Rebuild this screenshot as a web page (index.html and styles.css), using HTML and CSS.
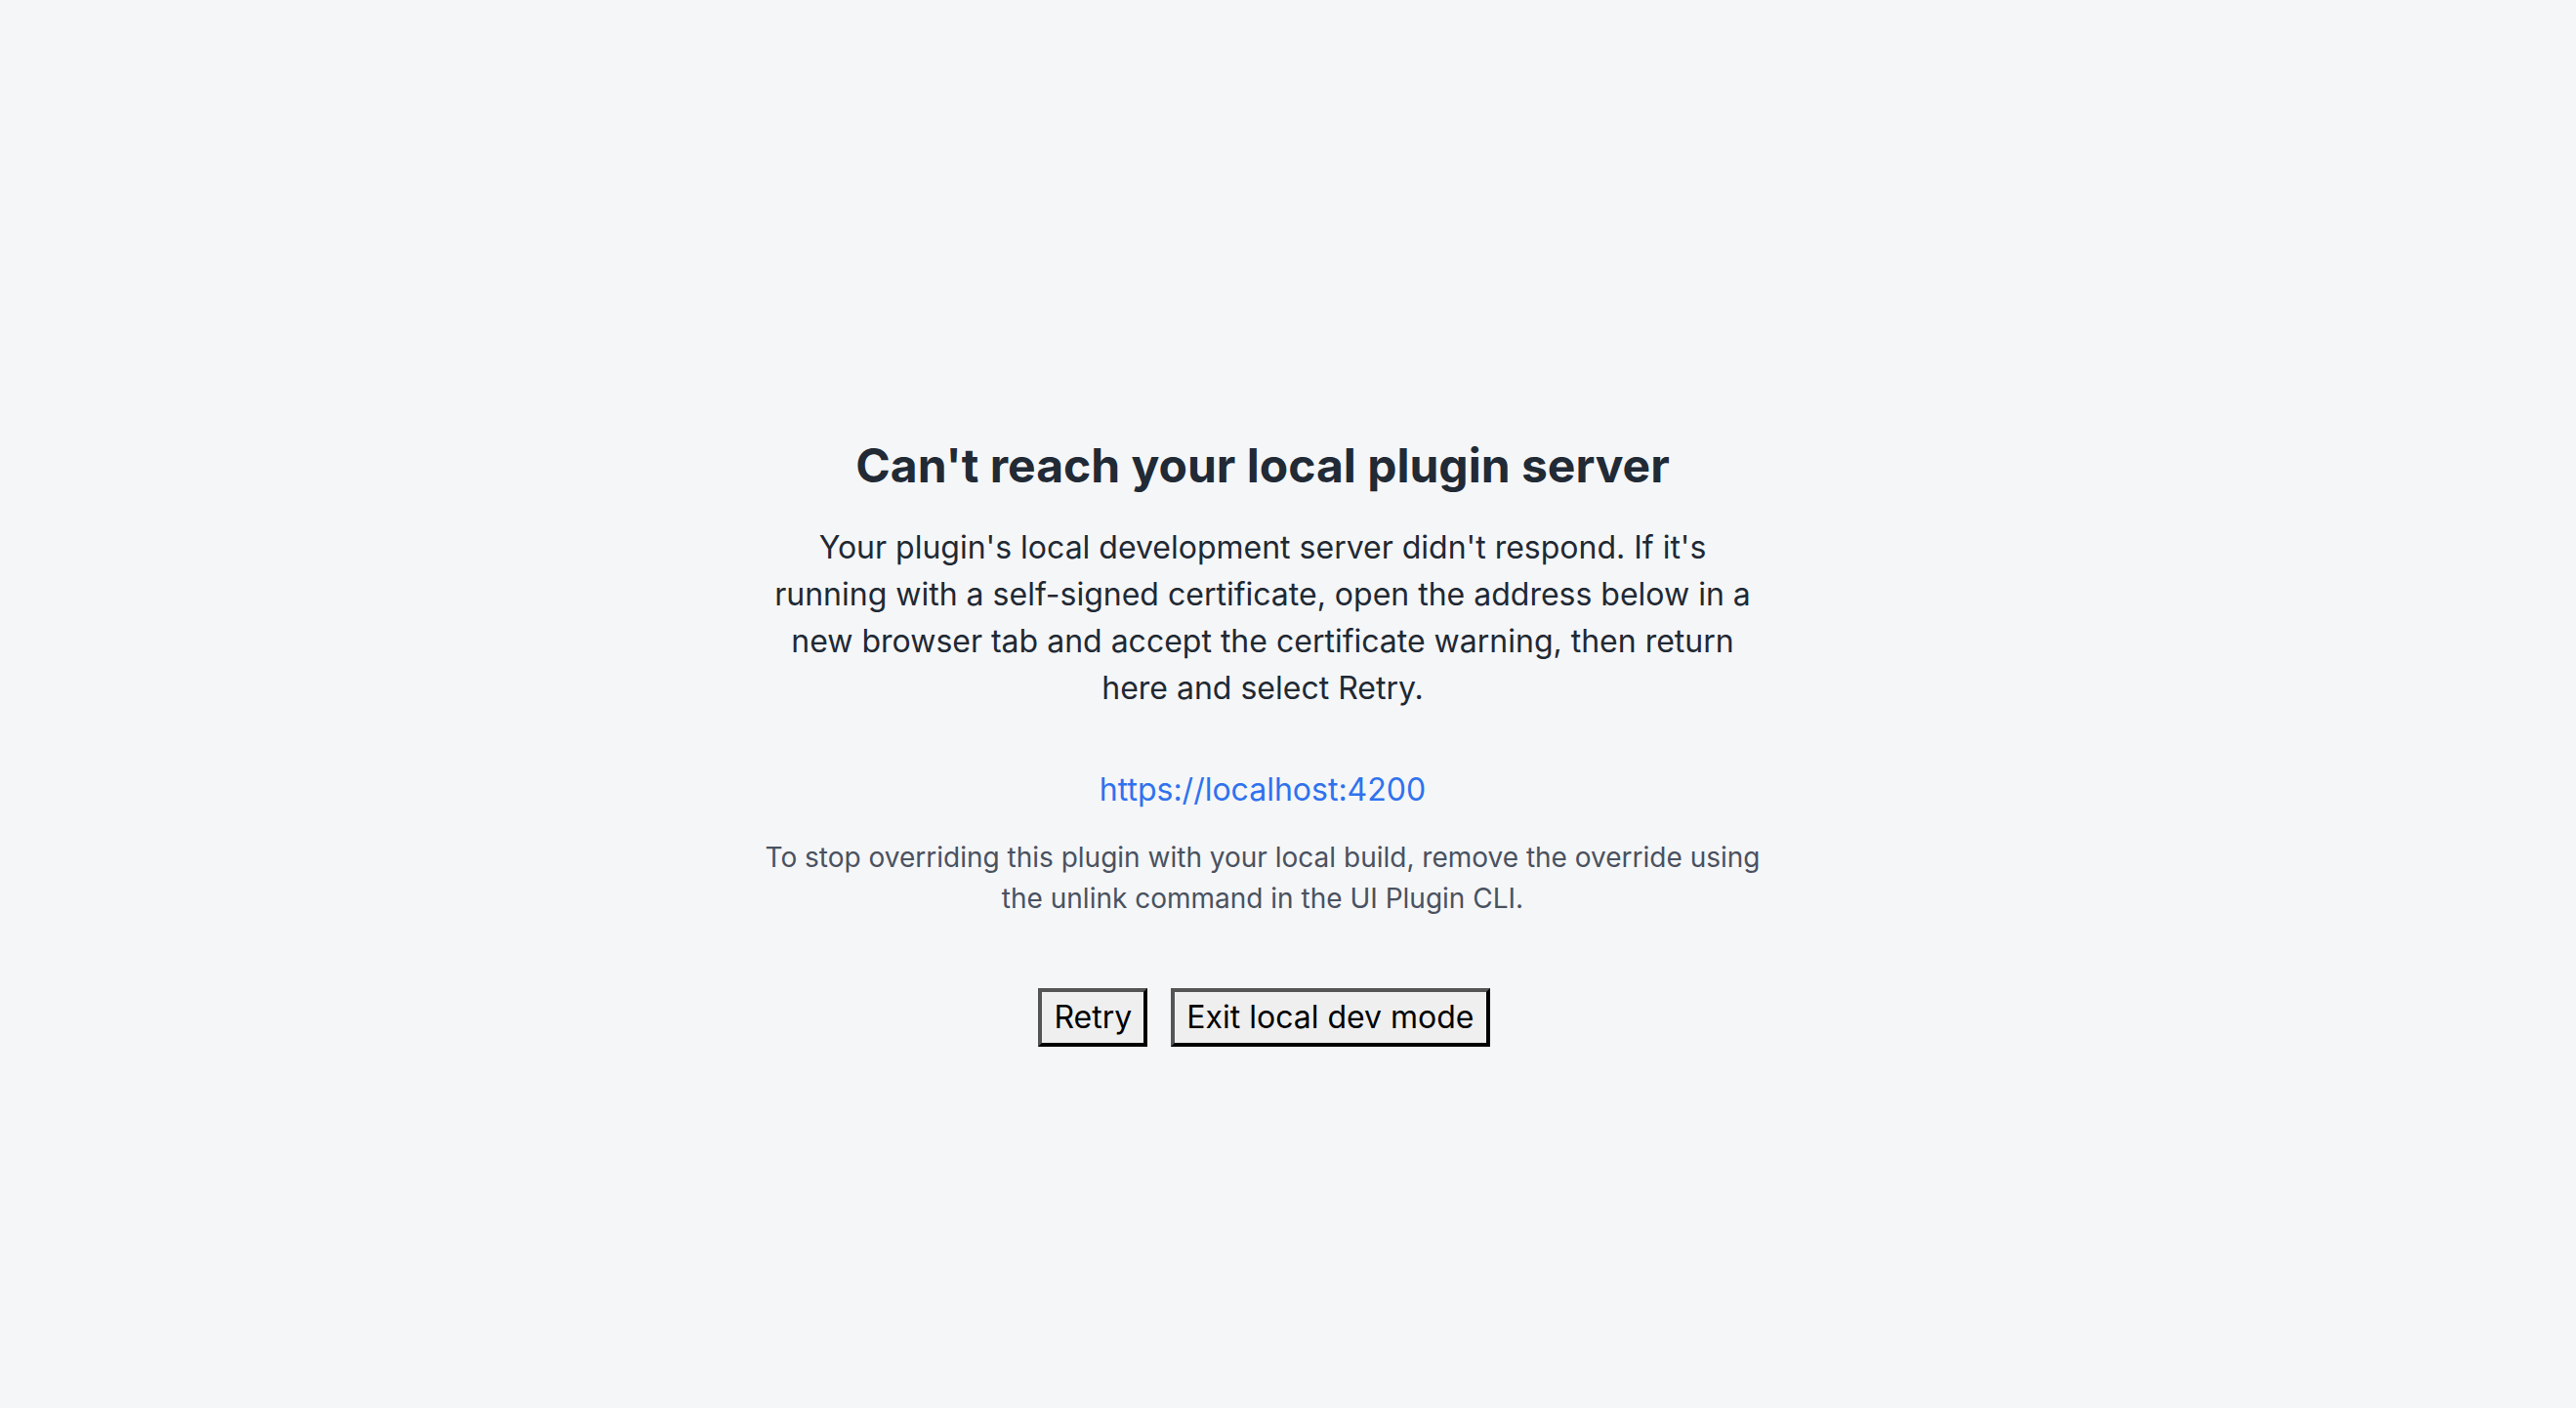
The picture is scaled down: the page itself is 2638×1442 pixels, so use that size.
FILE: index.html
```html
<!DOCTYPE html>
<html lang="en">
<head>
<meta charset="utf-8">
<title>Can't reach your local plugin server</title>
<link rel="stylesheet" href="styles.css">
</head>
<body>
<main class="page">
  <section class="card">
    <h1 class="title">Can't reach your local plugin server</h1>
    <p class="lead">Your plugin's local development server didn't respond. If it's running with a self-signed certificate, open the address below in a new browser tab and accept the certificate warning, then return here and select Retry.</p>
    <a class="link" href="https://localhost:4200">https://localhost:4200</a>
    <p class="note">To stop overriding this plugin with your local build, remove the override using the unlink command in the UI Plugin CLI.</p>
    <div class="actions">
      <button class="btn" type="button">Retry</button>
      <button class="btn" type="button">Exit local dev mode</button>
    </div>
  </section>
</main>
</body>
</html>
```
FILE: styles.css
```css
html, body {
  margin: 0;
  padding: 0;
  background: #f5f6f8;
}

body {
  font-family: Inter, "Noto Sans", "Liberation Sans", sans-serif;
  color: #1f2933;
}

.page {
  box-sizing: border-box;
  min-height: 100vh;
  padding: 448px 52px 0 0;
  display: flex;
  justify-content: center;
  align-items: flex-start;
}

.card {
  width: 1030px;
  display: flex;
  flex-direction: column;
  align-items: center;
  text-align: center;
}

.title {
  margin: 0;
  font-size: 48px;
  line-height: 58px;
  font-weight: 700;
  letter-spacing: 0;
  color: #212a35;
}

.lead {
  margin: 31px 0 0;
  max-width: 1012px;
  font-size: 32px;
  line-height: 48px;
  color: #1f2933;
}

.link {
  margin-top: 56px;
  font-size: 32px;
  line-height: 48px;
  color: #2f72ee;
  text-decoration: none;
}

.note {
  margin: 24px 0 0;
  font-size: 28px;
  line-height: 42px;
  color: #4a5260;
}

.actions {
  margin-top: 71px;
  padding-left: 3px;
  display: flex;
  gap: 24px;
}

.btn {
  font-family: Inter, "Noto Sans", "Liberation Sans", sans-serif;
  font-size: 32px;
  line-height: 40px;
  color: #000;
  background: #efefef;
  padding: 6px 12px;
  border-style: solid;
  border-width: 4px;
  border-color: #555 #000 #000 #555;
  border-radius: 0;
  cursor: pointer;
}
```
